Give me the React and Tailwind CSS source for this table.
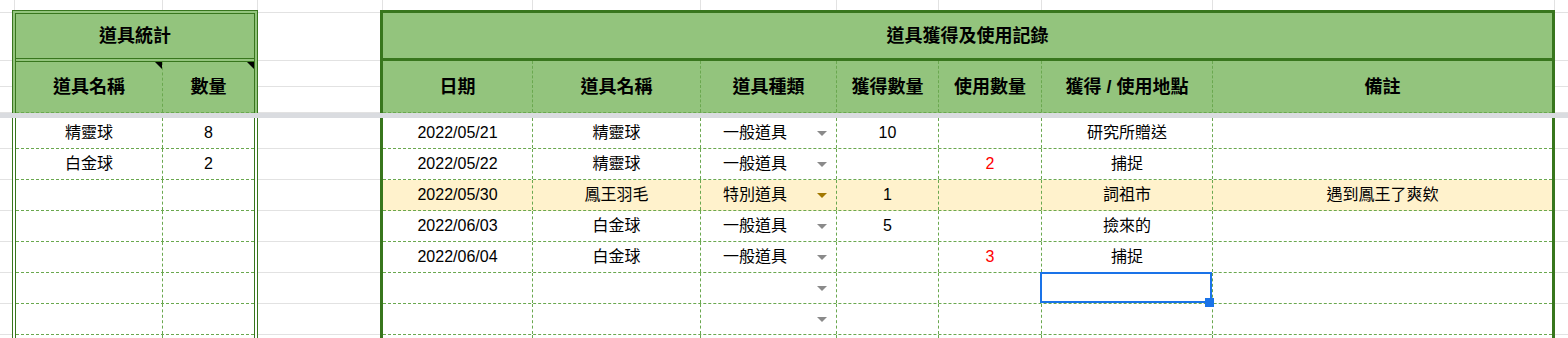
import React from "react";

const GRID = "border-[#e2e2e2]";

function TopGap({ cls }) {
  return (
    <div className={`${cls} shrink-0 flex flex-col`}>
      <div className="h-[13px] border-b border-[#e2e2e2]" />
      <div className="h-[48px] border-b border-[#e2e2e2]" />
      <div className="h-[26px] border-b border-[#e2e2e2]" />
      <div className="h-[26px] border-b border-[#e2e2e2]" />
    </div>
  );
}

function BottomGap({ cls }) {
  return (
    <div className={`${cls} shrink-0 flex flex-col`}>
      {Array.from({ length: 8 }).map((_, i) => (
        <div key={i} className="h-[31px] shrink-0 border-b border-[#e2e2e2]" />
      ))}
    </div>
  );
}

function Tri() {
  return (
    <svg className="absolute top-0 right-0" width="7" height="7" viewBox="0 0 7 7">
      <polygon points="0,0 7,0 7,7" fill="#000" />
    </svg>
  );
}

function Arrow({ color }) {
  return (
    <svg className="ml-[8px] mr-[9px] shrink-0" width="10" height="5" viewBox="0 0 10 5">
      <path d="M0 0H10L5 5Z" fill={color} />
    </svg>
  );
}

const leftRows = [
  ["精靈球", "8"],
  ["白金球", "2"],
  ["", ""],
  ["", ""],
  ["", ""],
  ["", ""],
  ["", ""],
  ["", ""],
];

const rightRows = [
  { d: "2022/05/21", n: "精靈球", t: "一般道具", g: "10", u: "", p: "研究所贈送", r: "", arrow: true },
  { d: "2022/05/22", n: "精靈球", t: "一般道具", g: "", u: "2", p: "捕捉", r: "", arrow: true },
  { d: "2022/05/30", n: "鳳王羽毛", t: "特別道具", g: "1", u: "", p: "詞祖市", r: "遇到鳳王了爽欸", arrow: true, hl: true },
  { d: "2022/06/03", n: "白金球", t: "一般道具", g: "5", u: "", p: "撿來的", r: "", arrow: true },
  { d: "2022/06/04", n: "白金球", t: "一般道具", g: "", u: "3", p: "捕捉", r: "", arrow: true },
  { d: "", n: "", t: "", g: "", u: "", p: "", r: "", arrow: true, sel: true },
  { d: "", n: "", t: "", g: "", u: "", p: "", r: "", arrow: true },
  { d: "", n: "", t: "", g: "", u: "", p: "", r: "", arrow: false },
];

const cellBase = "flex items-center justify-center leading-none";
const dashR = "border-r border-dashed border-[#6aa84f]";

export default function App() {
  return (
    <div className="w-[1568px] h-[338px] overflow-hidden bg-white text-black font-['Liberation_Sans','Noto_Sans_CJK_TC',sans-serif]">
      {/* Top (frozen) section */}
      <div className="flex h-[113px]">
        <TopGap cls="w-[12px]" />

        {/* Left table header */}
        <div className="w-[246px] shrink-0 flex flex-col">
          <div className="h-[10px] shrink-0 flex">
            <div className="w-[3px] border-r border-[#e2e2e2]" />
            <div className="w-[148px] border-r border-[#e2e2e2]" />
            <div className="w-[95px] border-r border-[#e2e2e2]" />
          </div>
          <div className="h-[103px] border-t border-x border-[#38761d] bg-[#93c47d] px-[2px] pt-[2px]">
            <div className="h-full border-t border-x border-[#38761d] flex flex-col">
              <div className={`h-[45px] shrink-0 border-b border-[#38761d] ${cellBase} text-[18px] font-bold`}>
                道具統計
              </div>
              <div className="h-[2px] shrink-0" />
              <div className="h-px shrink-0 bg-[#38761d]" />
              <div className="h-[51px] shrink-0 flex border-b border-dashed border-[#6aa84f]">
                <div className={`relative w-[147px] shrink-0 ${dashR} ${cellBase} text-[18px] font-bold`}>
                  道具名稱
                  <Tri />
                </div>
                <div className={`relative flex-1 ${cellBase} text-[18px] font-bold`}>
                  數量
                  <Tri />
                </div>
              </div>
            </div>
          </div>
        </div>

        <TopGap cls="w-[122px]" />

        {/* Right table header */}
        <div className="w-[1175px] shrink-0 flex flex-col">
          <div className="h-[10px] shrink-0 flex">
            <div className="w-[3px] border-r border-[#e2e2e2]" />
            <div className="w-[150px] border-r border-[#e2e2e2]" />
            <div className="w-[168px] border-r border-[#e2e2e2]" />
            <div className="w-[136px] border-r border-[#e2e2e2]" />
            <div className="w-[102px] border-r border-[#e2e2e2]" />
            <div className="w-[103px] border-r border-[#e2e2e2]" />
            <div className="w-[171px] border-r border-[#e2e2e2]" />
            <div className="w-[342px] border-r border-[#e2e2e2]" />
          </div>
          <div className="h-[103px] border-t-[3px] border-x-[3px] border-[#38761d] bg-[#93c47d] flex flex-col">
            <div className={`h-[48px] shrink-0 border-b-[3px] border-[#38761d] ${cellBase} text-[18px] font-bold`}>
              道具獲得及使用記錄
            </div>
            <div className="h-[52px] shrink-0 flex border-b border-dashed border-[#6aa84f] text-[18px] font-bold">
              <div className={`w-[150px] shrink-0 ${dashR} ${cellBase}`}>日期</div>
              <div className={`w-[168px] shrink-0 ${dashR} ${cellBase}`}>道具名稱</div>
              <div className={`w-[136px] shrink-0 ${dashR} ${cellBase}`}>道具種類</div>
              <div className={`w-[102px] shrink-0 ${dashR} ${cellBase}`}>獲得數量</div>
              <div className={`w-[103px] shrink-0 ${dashR} ${cellBase}`}>使用數量</div>
              <div className={`w-[171px] shrink-0 ${dashR} ${cellBase} whitespace-pre`}>獲得 / 使用地點</div>
              <div className={`flex-1 ${cellBase}`}>備註</div>
            </div>
          </div>
        </div>

        <TopGap cls="w-[13px]" />
      </div>

      {/* Frozen divider */}
      <div className="h-[5px] bg-[#dadce0]" />

      {/* Body */}
      <div className="flex h-[220px] text-[16px]">
        <BottomGap cls="w-[12px]" />

        <div className="w-[246px] shrink-0 border-x border-[#38761d] px-[2px]">
          <div className="h-full border-x border-[#38761d] flex flex-col">
            {leftRows.map((r, i) => (
              <div key={i} className="h-[31px] shrink-0 flex border-b border-dashed border-[#6aa84f]">
                <div className={`w-[147px] shrink-0 ${dashR} ${cellBase}`}>{r[0]}</div>
                <div className={`flex-1 ${cellBase}`}>{r[1]}</div>
              </div>
            ))}
          </div>
        </div>

        <BottomGap cls="w-[122px]" />

        <div className="w-[1175px] shrink-0 border-x-[3px] border-[#38761d] flex flex-col">
          {rightRows.map((r, i) => (
            <div
              key={i}
              className={`h-[31px] shrink-0 flex border-b border-dashed border-[#6aa84f] ${r.hl ? "bg-[#fff2cc]" : ""}`}
            >
              <div className={`w-[150px] shrink-0 ${dashR} ${cellBase}`}>{r.d}</div>
              <div className={`w-[168px] shrink-0 ${dashR} ${cellBase}`}>{r.n}</div>
              <div className={`w-[136px] shrink-0 ${dashR} flex items-center leading-none`}>
                <span className="flex-1 text-center">{r.t}</span>
                {r.arrow ? <Arrow color={r.hl ? "#a27800" : "#8a8a8a"} /> : <span className="w-[27px]" />}
              </div>
              <div className={`w-[102px] shrink-0 ${dashR} ${cellBase}`}>{r.g}</div>
              <div className={`w-[103px] shrink-0 ${dashR} ${cellBase} text-[#ff0000]`}>{r.u}</div>
              <div className={`relative w-[171px] shrink-0 ${dashR} ${cellBase}`}>
                {r.p}
                {r.sel && (
                  <>
                    <div className="absolute -left-[2px] -top-[1px] w-[172px] h-[31px] border-2 border-[#1a73e8] z-10" />
                    <div className="absolute left-[163px] top-[25px] w-[9px] h-[9px] bg-[#1a73e8] z-20" />
                  </>
                )}
              </div>
              <div className={`flex-1 ${cellBase}`}>{r.r}</div>
            </div>
          ))}
        </div>

        <BottomGap cls="w-[13px]" />
      </div>
    </div>
  );
}
